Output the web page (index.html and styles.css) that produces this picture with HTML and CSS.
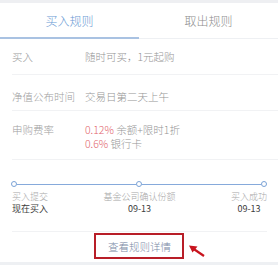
FILE: index.html
```html
<!DOCTYPE html>
<html lang="zh">
<head>
  <meta charset="UTF-8">
  <title>买入规则</title>
  <link rel="stylesheet" href="styles.css">
</head>
<body>
  <div class="topbar"></div>
  <div class="tabs">
    <div class="tab active">买入规则</div>
    <div class="tab">取出规则</div>
  </div>

  <div class="rules">
    <div class="rule">
      <div class="label">买入</div>
      <div class="val">随时可买，1元起购</div>
    </div>
    <div class="rule">
      <div class="label">净值公布时间</div>
      <div class="val">交易日第二天上午</div>
    </div>
    <div class="rule">
      <div class="label">申购费率</div>
      <div class="val">
        <div><span class="red">0.12%</span> 余额+限时1折</div>
        <div><span class="red">0.6%</span> 银行卡</div>
      </div>
    </div>
  </div>

  <div class="timeline">
    <div class="track">
      <span class="dot"></span>
      <span class="line"></span>
      <span class="dot"></span>
      <span class="line"></span>
      <span class="dot"></span>
    </div>
    <div class="steps">
      <div class="step left">
        <div class="step-name">买入提交</div>
        <div class="step-date">现在买入</div>
      </div>
      <div class="step center">
        <div class="step-name">基金公司确认份额</div>
        <div class="step-date">09-13</div>
      </div>
      <div class="step right">
        <div class="step-name">买入成功</div>
        <div class="step-date">09-13</div>
      </div>
    </div>
  </div>

  <div class="more">
    <div></div>
    <div class="more-btn">查看规则详情</div>
    <svg class="arrow" width="18" height="14" viewBox="0 0 18 14">
      <path d="M16 12 L5 4.5" stroke="#c8141e" stroke-width="2.2" fill="none"/>
      <path d="M1 1.5 L9.5 2.5 L4.5 8.5 Z" fill="#c8141e"/>
    </svg>
  </div>
  <div class="bottombar"></div>
</body>
</html>
```

FILE: styles.css
```css
html, body {
  margin: 0;
  padding: 0;
  background: #fff;
  font-family: "Noto Sans CJK SC", "Liberation Sans", sans-serif;
  font-weight: 300;
  width: 278px;
  overflow: hidden;
}

.topbar {
  height: 3px;
  background: #eeeff2;
}

.tabs {
  display: flex;
  height: 35px;
  border-bottom: 1px solid #eef0f3;
}

.tab {
  flex: 1;
  display: flex;
  align-items: center;
  justify-content: center;
  font-size: 12px;
  color: #8e8e8e;
}

.tab.active {
  color: #6a9ad4;
  border-bottom: 2px solid #a9c2e2;
  margin-bottom: -1px;
}

.rules {
  padding-left: 12px;
}

.rule {
  display: flex;
  align-items: flex-start;
  font-size: 10.5px;
  line-height: 14px;
  color: #a0a0a0;
  border-bottom: 1px solid #f1f2f4;
}

.rule:nth-child(1) {
  padding: 11px 0 10px;
}

.rule:nth-child(2) {
  padding: 15px 0 6px;
}

.rule:nth-child(3) {
  padding: 12px 0 8px;
}

.label {
  width: 73px;
  flex: none;
}

.val {
  color: #959595;
}

.red {
  color: #e2646c;
}

.timeline {
  padding: 21px 11px 0 11px;
}

.track {
  display: flex;
  align-items: center;
  height: 6px;
}

.dot {
  width: 4px;
  height: 4px;
  border: 1.2px solid #7aa2d6;
  border-radius: 50%;
  flex: none;
}

.line {
  flex: 1;
  height: 1px;
  background: #86aadb;
}

.steps {
  display: flex;
  justify-content: space-between;
  font-size: 9px;
  line-height: 12px;
  margin: 4px 0 0 1px;
  padding-bottom: 16px;
  border-bottom: 1px solid #f1f2f4;
}

.step-name {
  color: #a8a8a8;
}

.step-date {
  color: #3c3c3c;
  font-weight: 400;
}

.center, .right {
  text-align: center;
}

.more {
  display: grid;
  grid-template-columns: 1fr auto 1fr;
  padding: 1px 0 3px;
}

.more-btn {
  border: 2px solid #b81e28;
  padding: 5px 11px 3px 12px;
  font-size: 10.5px;
  line-height: 14px;
  color: #7a8aa6;
}

.arrow {
  margin: 11px 0 0 4px;
}

.bottombar {
  height: 3px;
  background: #eef0f3;
}
```
